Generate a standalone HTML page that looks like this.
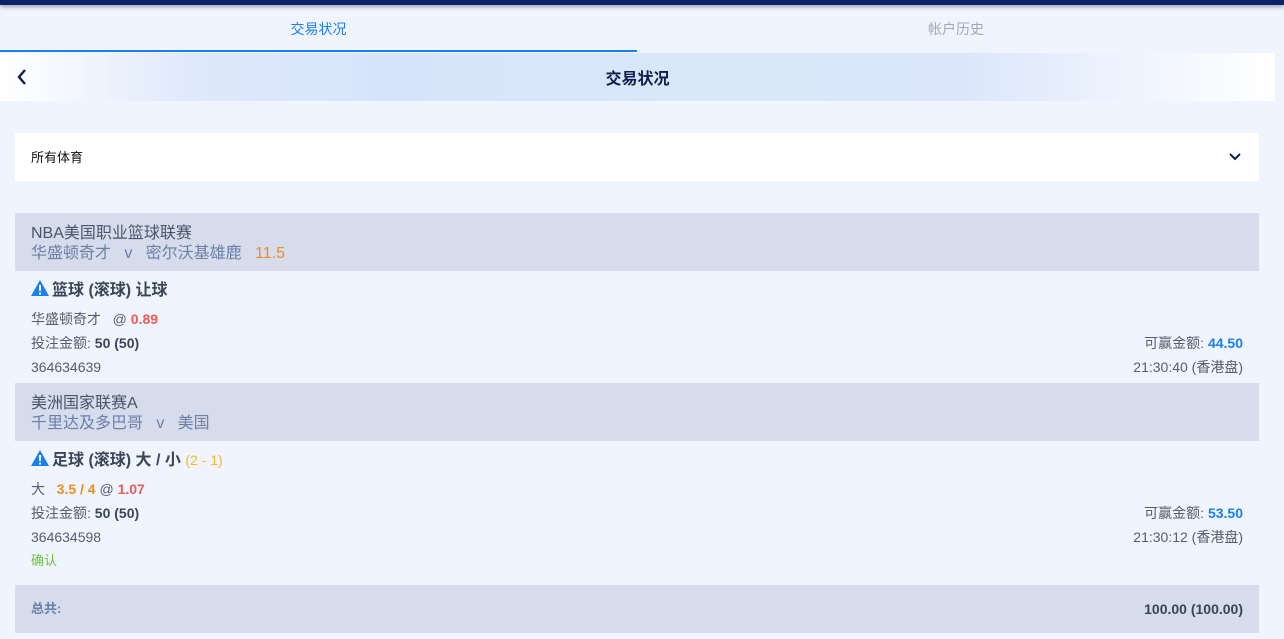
<!DOCTYPE html>
<html><head><meta charset="utf-8"><style>
*{margin:0;padding:0;box-sizing:border-box}
body{width:1284px;height:639px;overflow:hidden;background:#eff4fe;font-family:"Liberation Sans","Noto Sans CJK SC",sans-serif;color:#4a5568;position:relative}
.abs{position:absolute}
.topbar{left:0;top:0;width:1284px;height:5px;background:#0b2467;box-shadow:0 2px 4px rgba(0,0,0,.35)}
.tab{top:7px;height:45px;line-height:45px;text-align:center;font-size:14px}
.hdr{left:0;top:53px;width:1275px;height:48px;background:linear-gradient(90deg,#fff 0%,#dfe9fb 15%,#d6e4fb 30%,#d8e8f8 55%,#dbe6fb 75%,#fff 100%)}
.hdr .t{position:absolute;left:0;right:0;top:3px;line-height:48px;text-align:center;font-size:16px;font-weight:bold;color:#0d1f4c}
.dd{left:15px;top:133px;width:1244px;height:48px;background:#fff;font-size:13px;color:#111;line-height:50px;padding-left:16px}
.lg{left:15px;width:1244px;height:58px;background:#d6dceb;padding:11px 16px;font-size:16px;line-height:20px}
.line{left:31px;font-size:14px;line-height:16px;color:#555e6b;white-space:nowrap}
.r{left:auto;right:41px;text-align:right}
.b{font-weight:bold;color:#3a4556}
.h{left:31px;font-size:16px;line-height:20px;font-weight:bold;color:#3a4556}
.h svg{margin-right:3px}
</style></head><body>
<div class="abs topbar"></div>
<div class="abs tab" style="left:0;width:637px;color:#1a7ff0;border-bottom:2px solid #1a7ff0">交易状况</div>
<div class="abs tab" style="left:637px;width:638px;color:#a0a8b5">帐户历史</div>
<div class="abs hdr"><svg style="position:absolute;left:16px;top:15px" width="12" height="18" viewBox="0 0 12 18"><path d="M9 2 L3 9 L9 16" stroke="#0d1f4c" stroke-width="2.4" fill="none"/></svg><div class="t">交易状况</div></div>
<div class="abs dd">所有体育<svg style="position:absolute;right:18px;top:19px" width="12" height="9" viewBox="0 0 12 9"><path d="M1 2 L6 7 L11 2" stroke="#0d1f4c" stroke-width="2" fill="none"/></svg></div>

<div class="abs lg" style="top:213px"><div style="color:#4a5568">NBA美国职业篮球联赛</div><div style="color:#6b7fa8">华盛顿奇才 &nbsp; v &nbsp; 密尔沃基雄鹿 &nbsp; <span style="color:#f08c1a">11.5</span></div></div>
<div class="abs h" style="top:280px"><svg width="18" height="16" viewBox="0 0 18 16" style="vertical-align:-1px"><path d="M9 0 L18 16 L0 16Z" fill="#1a7ff0"/><rect x="8" y="5" width="2" height="6" fill="#fff"/><rect x="8" y="12.5" width="2" height="2" fill="#fff"/></svg>篮球 (滚球) 让球</div>
<div class="abs line" style="top:311px">华盛顿奇才 &nbsp; @ <b style="color:#ee5a55">0.89</b></div>
<div class="abs line" style="top:335px">投注金额: <b class="b">50 (50)</b></div>
<div class="abs line r" style="top:335px">可赢金额: <b style="color:#1a7ff0">44.50</b></div>
<div class="abs line" style="top:359px">364634639</div>
<div class="abs line r" style="top:359px">21:30:40 (香港盘)</div>

<div class="abs lg" style="top:383px"><div>美洲国家联赛A</div><div style="color:#6b7fa8">千里达及多巴哥 &nbsp; v &nbsp; 美国</div></div>
<div class="abs h" style="top:450px"><svg width="18" height="16" viewBox="0 0 18 16" style="vertical-align:-1px"><path d="M9 0 L18 16 L0 16Z" fill="#1a7ff0"/><rect x="8" y="5" width="2" height="6" fill="#fff"/><rect x="8" y="12.5" width="2" height="2" fill="#fff"/></svg>足球 (滚球) 大 / 小 <span style="font-weight:normal;font-size:14px;color:#f5b820">(2 - 1)</span></div>
<div class="abs line" style="top:481px">大 &nbsp; <b style="color:#f08c1a">3.5 / 4</b> @ <b style="color:#ee5a55">1.07</b></div>
<div class="abs line" style="top:505px">投注金额: <b class="b">50 (50)</b></div>
<div class="abs line r" style="top:505px">可赢金额: <b style="color:#1a7ff0">53.50</b></div>
<div class="abs line" style="top:529px">364634598</div>
<div class="abs line r" style="top:529px">21:30:12 (香港盘)</div>
<div class="abs line" style="top:553px;color:#6cc33a;font-size:13px">确认</div>

<div class="abs" style="left:15px;top:585px;width:1244px;height:48px;background:#d6dceb"></div>
<div class="abs line" style="top:601px;font-weight:bold;color:#6b7fa8;font-size:13px">总共:</div>
<div class="abs line r b" style="top:601px">100.00 (100.00)</div>
</body></html>
